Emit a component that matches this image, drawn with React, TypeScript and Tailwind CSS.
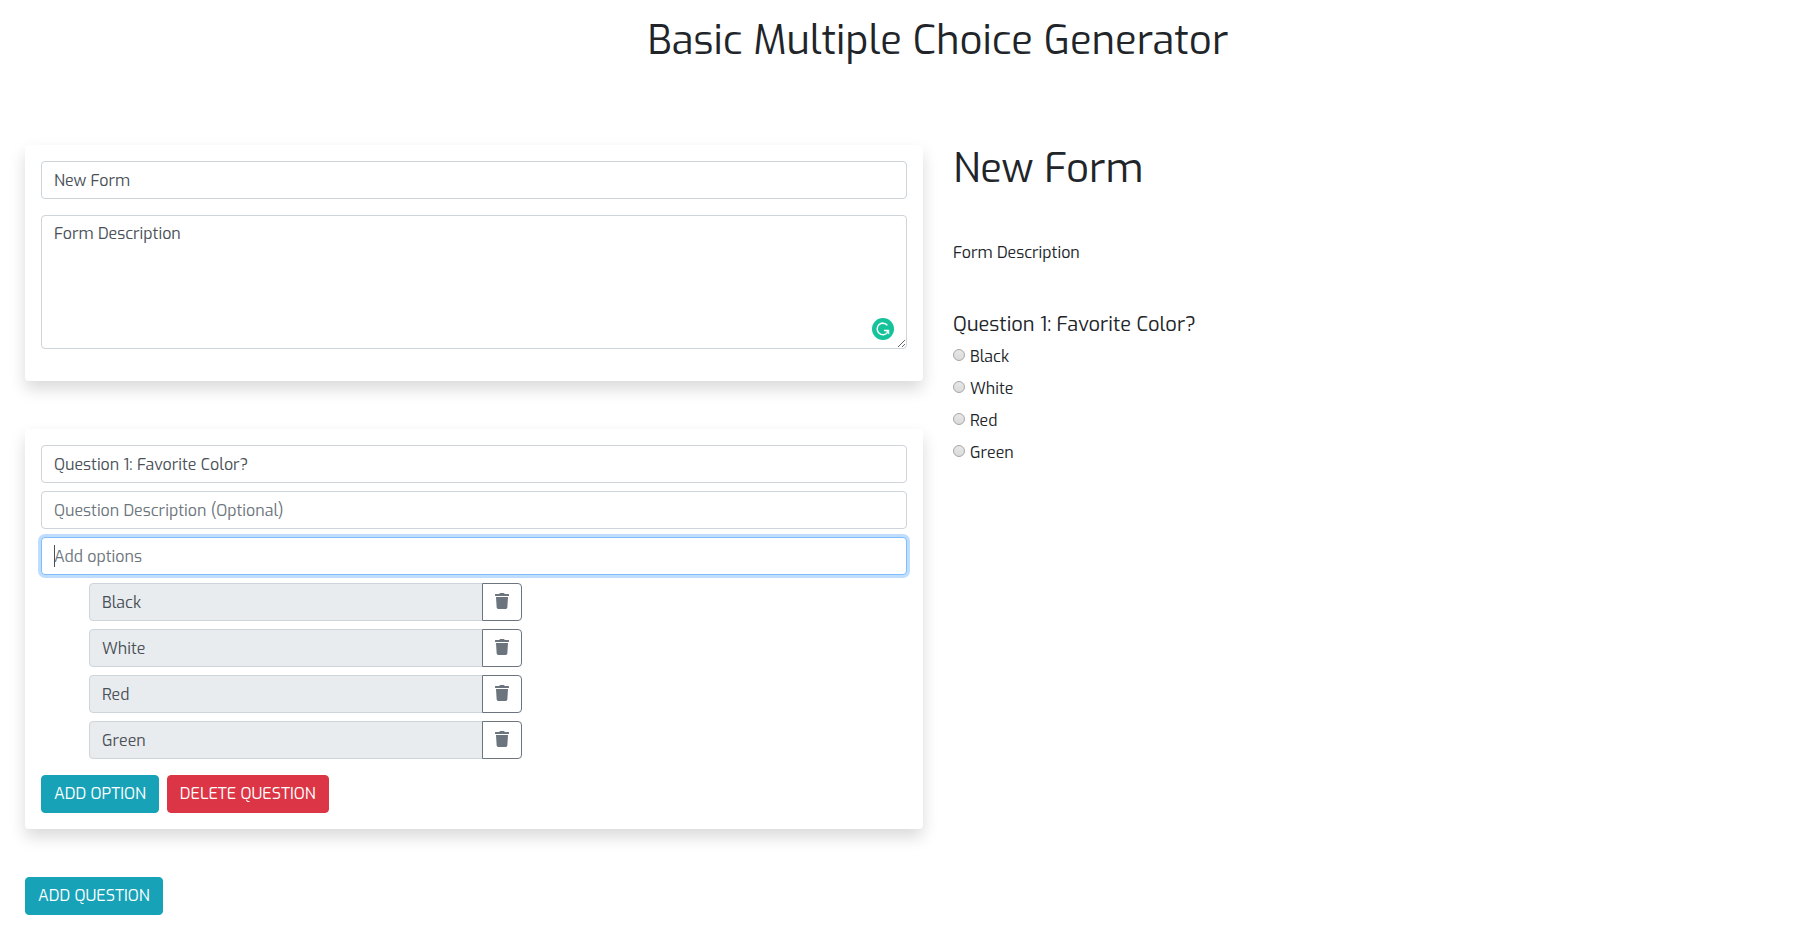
import { useState } from "react";

const options = ["Black", "White", "Red", "Green"];

const field =
  "block w-full rounded border border-[#ced4da] bg-white px-3 text-base leading-6 text-[#495057] placeholder:text-[#6c757d] placeholder:opacity-100 outline-none";

function TrashIcon() {
  return (
    <svg viewBox="0 0 448 512" className="h-4 w-3.5" fill="currentColor" aria-hidden="true">
      <path d="M432 32H312l-9.4-18.7A24 24 0 0 0 281.1 0H166.8a23.72 23.72 0 0 0-21.4 13.3L136 32H16A16 16 0 0 0 0 48v32a16 16 0 0 0 16 16h416a16 16 0 0 0 16-16V48a16 16 0 0 0-16-16zM53.2 467a48 48 0 0 0 47.9 45h245.8a48 48 0 0 0 47.9-45L416 128H32z" />
    </svg>
  );
}

function GrammarBadge() {
  return (
    <svg viewBox="0 0 22 22" className="absolute right-[13px] bottom-[9px] size-[22px]" aria-hidden="true">
      <circle cx="11" cy="11" r="11" fill="#15c39a" />
      <path
        d="M15.4 7.2A5.8 5.8 0 1 0 15.6 14.4M12 12.6H16.8"
        fill="none"
        stroke="#fff"
        strokeWidth="1.5"
      />
      <path d="M13 11.9H17.2V16.6L15.7 15.2L14.6 13.4Z" fill="#fff" />
    </svg>
  );
}

function Card({ children }: { children: React.ReactNode }) {
  return (
    <section className="mb-12 rounded bg-white p-4 shadow-[0_8px_16px_rgba(0,0,0,0.15)]">{children}</section>
  );
}

function Button({ tone, children }: { tone: "info" | "danger"; children: string }) {
  return (
    <button
      type="button"
      className={
        "h-[38px] rounded border px-3 text-base leading-6 font-normal text-white uppercase " +
        (tone === "info" ? "border-[#17a2b8] bg-[#17a2b8]" : "border-[#dc3545] bg-[#dc3545]")
      }
    >
      {children}
    </button>
  );
}

export default function App() {
  const [title, setTitle] = useState("New Form");
  const [description, setDescription] = useState("Form Description");
  const [question, setQuestion] = useState("Question 1: Favorite Color?");

  return (
    <div className="overflow-hidden bg-white font-['Exo','Exo_2','Open_Sans',sans-serif] text-base leading-6 font-normal text-[#212529]">
      <div className="-mr-[34px] ml-[25px] pt-[17px] pb-2">
        <h1 className="mb-20 text-center text-[40px] leading-[48px] font-normal">
          Basic Multiple Choice Generator
        </h1>
        <div className="grid grid-cols-2 gap-[30px]">
          <main>
            <Card>
              <input
                aria-label="Form title"
                className={field + " mb-4 h-[38px]"}
                value={title}
                onChange={(e) => setTitle(e.target.value)}
              />
              <div className="relative mb-4">
                <textarea
                  aria-label="Form description"
                  rows={5}
                  className={field + " resize-y py-1.5"}
                  value={description}
                  onChange={(e) => setDescription(e.target.value)}
                />
                <GrammarBadge />
              </div>
            </Card>
            <Card>
              <div className="flex flex-col gap-2">
                <input
                  aria-label="Question"
                  className={field + " h-[38px]"}
                  value={question}
                  onChange={(e) => setQuestion(e.target.value)}
                />
                <input
                  aria-label="Question description"
                  className={field + " h-[38px]"}
                  placeholder="Question Description (Optional)"
                />
                <div className="relative">
                  <input
                    aria-label="Add options"
                    className="block h-[38px] w-full rounded border border-[#80bdff] bg-white px-3 text-base leading-6 text-[#495057] caret-transparent shadow-[0_0_0_3px_rgba(0,123,255,0.25)] outline-none placeholder:text-[#6c757d] placeholder:opacity-100"
                    placeholder="Add options"
                  />
                  <span className="absolute top-2 left-[13px] h-[22px] w-px bg-[#495057]" />
                </div>
                {options.map((option) => (
                  <div key={option} className="ml-12 flex w-1/2">
                    <input
                      aria-label={"Option " + option}
                      disabled
                      value={option}
                      className="h-[38px] min-w-0 flex-1 rounded-l border border-[#ced4da] bg-[#e9ecef] px-3 text-base leading-6 text-[#495057]"
                    />
                    <button
                      type="button"
                      aria-label={"Delete " + option}
                      className="-ml-px flex h-[38px] w-10 items-center justify-center rounded-r border border-[#6c757d] bg-white pb-0.5 text-[#6c757d]"
                    >
                      <TrashIcon />
                    </button>
                  </div>
                ))}
              </div>
              <div className="mt-4 flex gap-2">
                <Button tone="info">Add option</Button>
                <Button tone="danger">Delete question</Button>
              </div>
            </Card>
            <Button tone="info">Add question</Button>
          </main>
          <aside>
            <h1 className="text-[40px] leading-[48px] font-normal">{title}</h1>
            <p className="mt-12 mb-12">{description}</p>
            <fieldset>
              <legend className="mb-2 text-xl leading-6">{question}</legend>
              {options.map((option) => (
                <label key={option} className="mb-2 flex items-center gap-[5px]">
                  <input
                    type="radio"
                    name="answer"
                    className="mb-1 size-3 appearance-none rounded-full border border-[#a6a6a6] bg-linear-to-b from-[#e8e8e8] to-[#dadada] checked:bg-[#555]"
                  />
                  {option}
                </label>
              ))}
            </fieldset>
          </aside>
        </div>
      </div>
    </div>
  );
}
